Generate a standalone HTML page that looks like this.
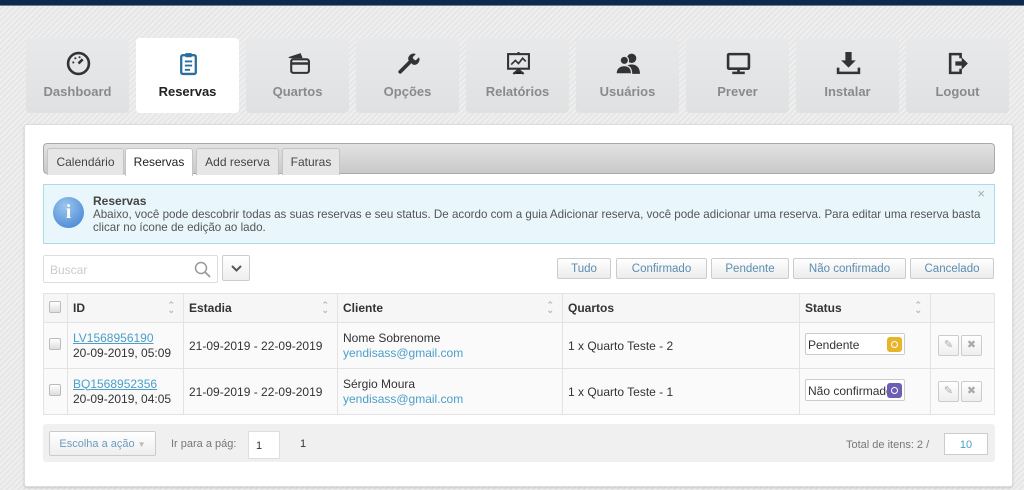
<!DOCTYPE html>
<html><head><meta charset="utf-8"><style>
*{box-sizing:border-box;margin:0;padding:0}
body{width:1024px;height:490px;overflow:hidden;font-family:"Liberation Sans",Arial,sans-serif;background:#ececec repeating-linear-gradient(135deg,#efefef 0 2px,#e6e6e6 2px 4px);position:relative}
.top{position:absolute;left:0;top:0;width:1024px;height:6px;background:#0d2a4d;border-bottom:1px solid #6c7f95}
.nav{position:absolute;top:38px;width:103px;height:75px;background:linear-gradient(#e8e9ea,#e0e1e2);border-radius:4px;text-align:center;color:#8a8a8a;font-weight:bold;font-size:13px}
.nav.act{background:#fff;color:#222}
.nav svg{position:absolute;left:40px;top:13px}
.nav span{position:absolute;left:0;right:0;top:46px}
.panel{position:absolute;left:24px;top:124px;width:989px;height:363px;background:#fff;border:1px solid #ddd;border-radius:3px;box-shadow:0 1px 2px rgba(0,0,0,.15)}
.abs{position:absolute}
.tabs{left:43px;top:143px;width:952px;height:31px;border:1px solid #aaa;border-radius:4px;background:linear-gradient(#e2e2e2,#c9c9c9)}
.tab{position:absolute;top:4px;height:27px;border:1px solid #c5c5c5;border-bottom:none;background:#e6e6e6;font-size:12px;color:#444;padding-top:6px;text-align:center;border-radius:3px 3px 0 0}
.tab.act{background:#fff;color:#222;height:28px}
.info{left:43px;top:184px;width:952px;height:60px;background:#e9f6fb;border:1px solid #a9dbe9;font-size:11.6px;color:#555;line-height:13px}
.btn{position:absolute;top:258px;height:21px;border:1px solid #ccc;border-radius:2px;background:linear-gradient(#fff,#ececec);color:#5a8db0;font-size:11.5px;text-align:center;padding-top:4px}
table{position:absolute;left:43px;top:293px;width:952px;border-collapse:collapse;font-size:12px;color:#333}
td,th{border:1px solid #e3e3e3;text-align:left;padding:0 5px}
th{height:29px;background:#f6f6f6;font-weight:bold;position:relative}
tr.r td{height:46px;background:#fafafa}
a{color:#4a9fc9}
.cb{display:inline-block;width:12px;height:12px;border:1px solid #bbb;border-radius:2px;background:linear-gradient(#fff,#ddd)}
.sort{position:absolute;right:8px;top:9px;color:#bbb;font-size:9px;line-height:5px}
.sel{display:inline-block;position:relative;width:100px;height:22px;border:1px solid #ccc;border-radius:2px;padding:4px 2px;background:#fff;white-space:nowrap;overflow:hidden}
.dot{position:absolute;right:2px;top:3px;width:15px;height:15px;border-radius:3px}
.dot::after{content:"";position:absolute;left:4px;top:4px;width:5px;height:5px;border:1px solid #fff;border-radius:50%}
.ib{display:inline-block;width:21px;height:21px;border:1px solid #ccc;border-radius:2px;background:linear-gradient(#fff,#eee);color:#aaa;font-size:11px;text-align:center;line-height:19px;margin-left:2px}
.foot{left:43px;top:424px;width:952px;height:38px;background:#f0f0f0;border-radius:3px;font-size:11px;color:#777}
</style></head><body>
<div class="top"></div>

<div class="nav" style="left:26px"><svg width="25" height="25" viewBox="0 0 24 24"><circle cx="12" cy="12" r="10" fill="none" stroke="#333" stroke-width="2.5"/><path d="M12 12l4-4" stroke="#333" stroke-width="2.5"/><circle cx="7" cy="11" r="1" fill="#333"/><circle cx="9" cy="7" r="1" fill="#333"/><circle cx="13" cy="6" r="1" fill="#333"/></svg><span>Dashboard</span></div>
<div class="nav act" style="left:136px"><svg width="25" height="25" viewBox="0 0 24 24"><rect x="5" y="4" width="14" height="18" rx="1.5" fill="none" stroke="#2b6ea0" stroke-width="2.2"/><rect x="9" y="2" width="6" height="4" fill="#2b6ea0"/><path d="M8.5 10h7M8.5 14h7M8.5 18h5" stroke="#2b6ea0" stroke-width="1.8"/></svg><span>Reservas</span></div>
<div class="nav" style="left:246px"><svg width="25" height="25" viewBox="0 0 24 24"><path d="M2 6l12-4 2 5H4z" fill="#333"/><rect x="5" y="8" width="17" height="13" rx="2" fill="none" stroke="#333" stroke-width="2"/><path d="M5 12h17" stroke="#333" stroke-width="2.5"/></svg><span>Quartos</span></div>
<div class="nav" style="left:356px"><svg width="25" height="25" viewBox="0 0 24 24"><path d="M4 20l9-9" stroke="#333" stroke-width="3.5" stroke-linecap="round"/><path d="M12 9a5 5 0 0 1 7-6l-3 3 1 2 2 1 3-3a5 5 0 0 1-6 7z" fill="#333"/></svg><span>Opções</span></div>
<div class="nav" style="left:466px"><svg width="25" height="25" viewBox="0 0 24 24"><rect x="2" y="3" width="20" height="14" fill="none" stroke="#333" stroke-width="2"/><path d="M5 13l4-4 3 3 4-5 3 3" fill="none" stroke="#333" stroke-width="1.6"/><path d="M12 17v4M7 22l5-4 5 4M12 1v2" stroke="#333" stroke-width="2"/></svg><span>Relatórios</span></div>
<div class="nav" style="left:576px"><svg width="25" height="25" viewBox="0 0 24 24"><circle cx="15" cy="7" r="4.5" fill="#333"/><path d="M7 22c0-6 3-9 8-9s8 3 8 9z" fill="#333"/><circle cx="8" cy="9" r="4" fill="#333" stroke="#e4e5e6" stroke-width="1.2"/><path d="M0 22c0-5 3-8 8-8s7 3 7 8z" fill="#333" stroke="#e4e5e6" stroke-width="1.2"/></svg><span>Usuários</span></div>
<div class="nav" style="left:686px"><svg width="25" height="25" viewBox="0 0 24 24"><rect x="2" y="3" width="20" height="14" rx="1" fill="none" stroke="#333" stroke-width="2.5"/><path d="M12 17v3M6 21h12" stroke="#333" stroke-width="2.5"/></svg><span>Prever</span></div>
<div class="nav" style="left:796px"><svg width="25" height="25" viewBox="0 0 24 24"><path d="M9 1h6v8h4l-7 7-7-7h4z" fill="#333"/><path d="M2 16v5h20v-5" fill="none" stroke="#333" stroke-width="2.5"/></svg><span>Instalar</span></div>
<div class="nav" style="left:906px"><svg width="25" height="25" viewBox="0 0 24 24"><path d="M14 7V3H4v18h10v-4" fill="none" stroke="#333" stroke-width="2.5"/><path d="M9 10h6V6l6 6-6 6v-4H9z" fill="#333"/></svg><span>Logout</span></div>

<div class="panel"></div>
<div class="abs tabs">
<div class="tab" style="left:3px;width:77px">Calendário</div>
<div class="tab act" style="left:81px;width:68px">Reservas</div>
<div class="tab" style="left:152px;width:83px">Add reserva</div>
<div class="tab" style="left:238px;width:58px">Faturas</div>
</div>
<div class="abs info">
<div class="abs" style="left:9px;top:12px;width:31px;height:31px;border-radius:50%;background:radial-gradient(circle at 40% 30%,#9cc6ef,#3b7fcf);color:#fff;font:bold 20px 'Liberation Serif',serif;text-align:center;line-height:31px">i</div>
<div class="abs" style="left:49px;top:10px;width:900px"><b style="color:#444;font-weight:bold;font-size:12px">Reservas</b><br>Abaixo, você pode descobrir todas as suas reservas e seu status. De acordo com a guia Adicionar reserva, você pode adicionar uma reserva. Para editar uma reserva basta<br>clicar no ícone de edição ao lado.</div>
<div class="abs" style="right:9px;top:2px;color:#aaa;font-size:13px">×</div>
</div>
<div class="abs" style="left:43px;top:255px;width:175px;height:28px;border:1px solid #ddd;border-radius:2px;font-size:12px;color:#ccc;padding:7px 6px">Buscar<svg style="position:absolute;right:6px;top:5px" width="17" height="17" viewBox="0 0 17 17"><circle cx="7" cy="7" r="5.5" fill="none" stroke="#999" stroke-width="1.5"/><path d="M11 11l5 5" stroke="#999" stroke-width="1.8"/></svg></div>
<div class="abs" style="left:222px;top:255px;width:28px;height:26px;border:1px solid #ccc;border-radius:2px;background:linear-gradient(#fff,#eee)"><svg style="position:absolute;left:8px;top:9px" width="11" height="7" viewBox="0 0 11 7"><path d="M1 1l4.5 4.5L10 1" fill="none" stroke="#555" stroke-width="2"/></svg></div>
<div class="btn" style="left:557px;width:54px">Tudo</div>
<div class="btn" style="left:616px;width:91px">Confirmado</div>
<div class="btn" style="left:711px;width:78px">Pendente</div>
<div class="btn" style="left:793px;width:113px">Não confirmado</div>
<div class="btn" style="left:910px;width:84px">Cancelado</div>

<table>
<tr><th style="width:24px"><span class="cb"></span></th><th style="width:116px">ID<span class="sort">⌃<br>⌄</span></th><th style="width:154px">Estadia<span class="sort">⌃<br>⌄</span></th><th style="width:225px">Cliente<span class="sort">⌃<br>⌄</span></th><th style="width:237px">Quartos</th><th style="width:131px">Status<span class="sort">⌃<br>⌄</span></th><th></th></tr>
<tr class="r"><td><span class="cb"></span></td><td style="line-height:15px"><a style="text-decoration:underline">LV1568956190</a><br>20-09-2019, 05:09</td><td>21-09-2019 - 22-09-2019</td><td style="line-height:15px">Nome Sobrenome<br><a>yendisass@gmail.com</a></td><td>1 x Quarto Teste - 2</td><td><span class="sel">Pendente<span class="dot" style="background:#e8b52a"></span></span></td><td><span class="ib">✎</span><span class="ib">✖</span></td></tr>
<tr class="r"><td><span class="cb"></span></td><td style="line-height:15px"><a style="text-decoration:underline">BQ1568952356</a><br>20-09-2019, 04:05</td><td>21-09-2019 - 22-09-2019</td><td style="line-height:15px">Sérgio Moura<br><a>yendisass@gmail.com</a></td><td>1 x Quarto Teste - 1</td><td><span class="sel">Não confirmado<span class="dot" style="background:#6d5db5"></span></span></td><td><span class="ib">✎</span><span class="ib">✖</span></td></tr>
</table>

<div class="abs foot">
<div class="abs" style="left:6px;top:7px;width:107px;height:25px;border:1px solid #ccc;border-radius:2px;background:linear-gradient(#fff,#eee);color:#6b9cc0;padding-top:6px;text-align:center">Escolha a ação <span style="color:#bbb;font-size:8px">▼</span></div>
<div class="abs" style="left:128px;top:14px">Ir para a pág:</div>
<div class="abs" style="left:205px;top:7px;width:32px;height:28px;background:#fff;border:1px solid #ddd;color:#333;padding:8px 7px">1</div>
<div class="abs" style="left:257px;top:14px;color:#333">1</div>
<div class="abs" style="left:803px;top:15px">Total de itens: 2 /</div>
<div class="abs" style="left:901px;top:9px;width:44px;height:22px;border:1px solid #ccc;background:#fff;color:#4a9fc9;text-align:center;padding-top:5px">10</div>
</div>
</body></html>
